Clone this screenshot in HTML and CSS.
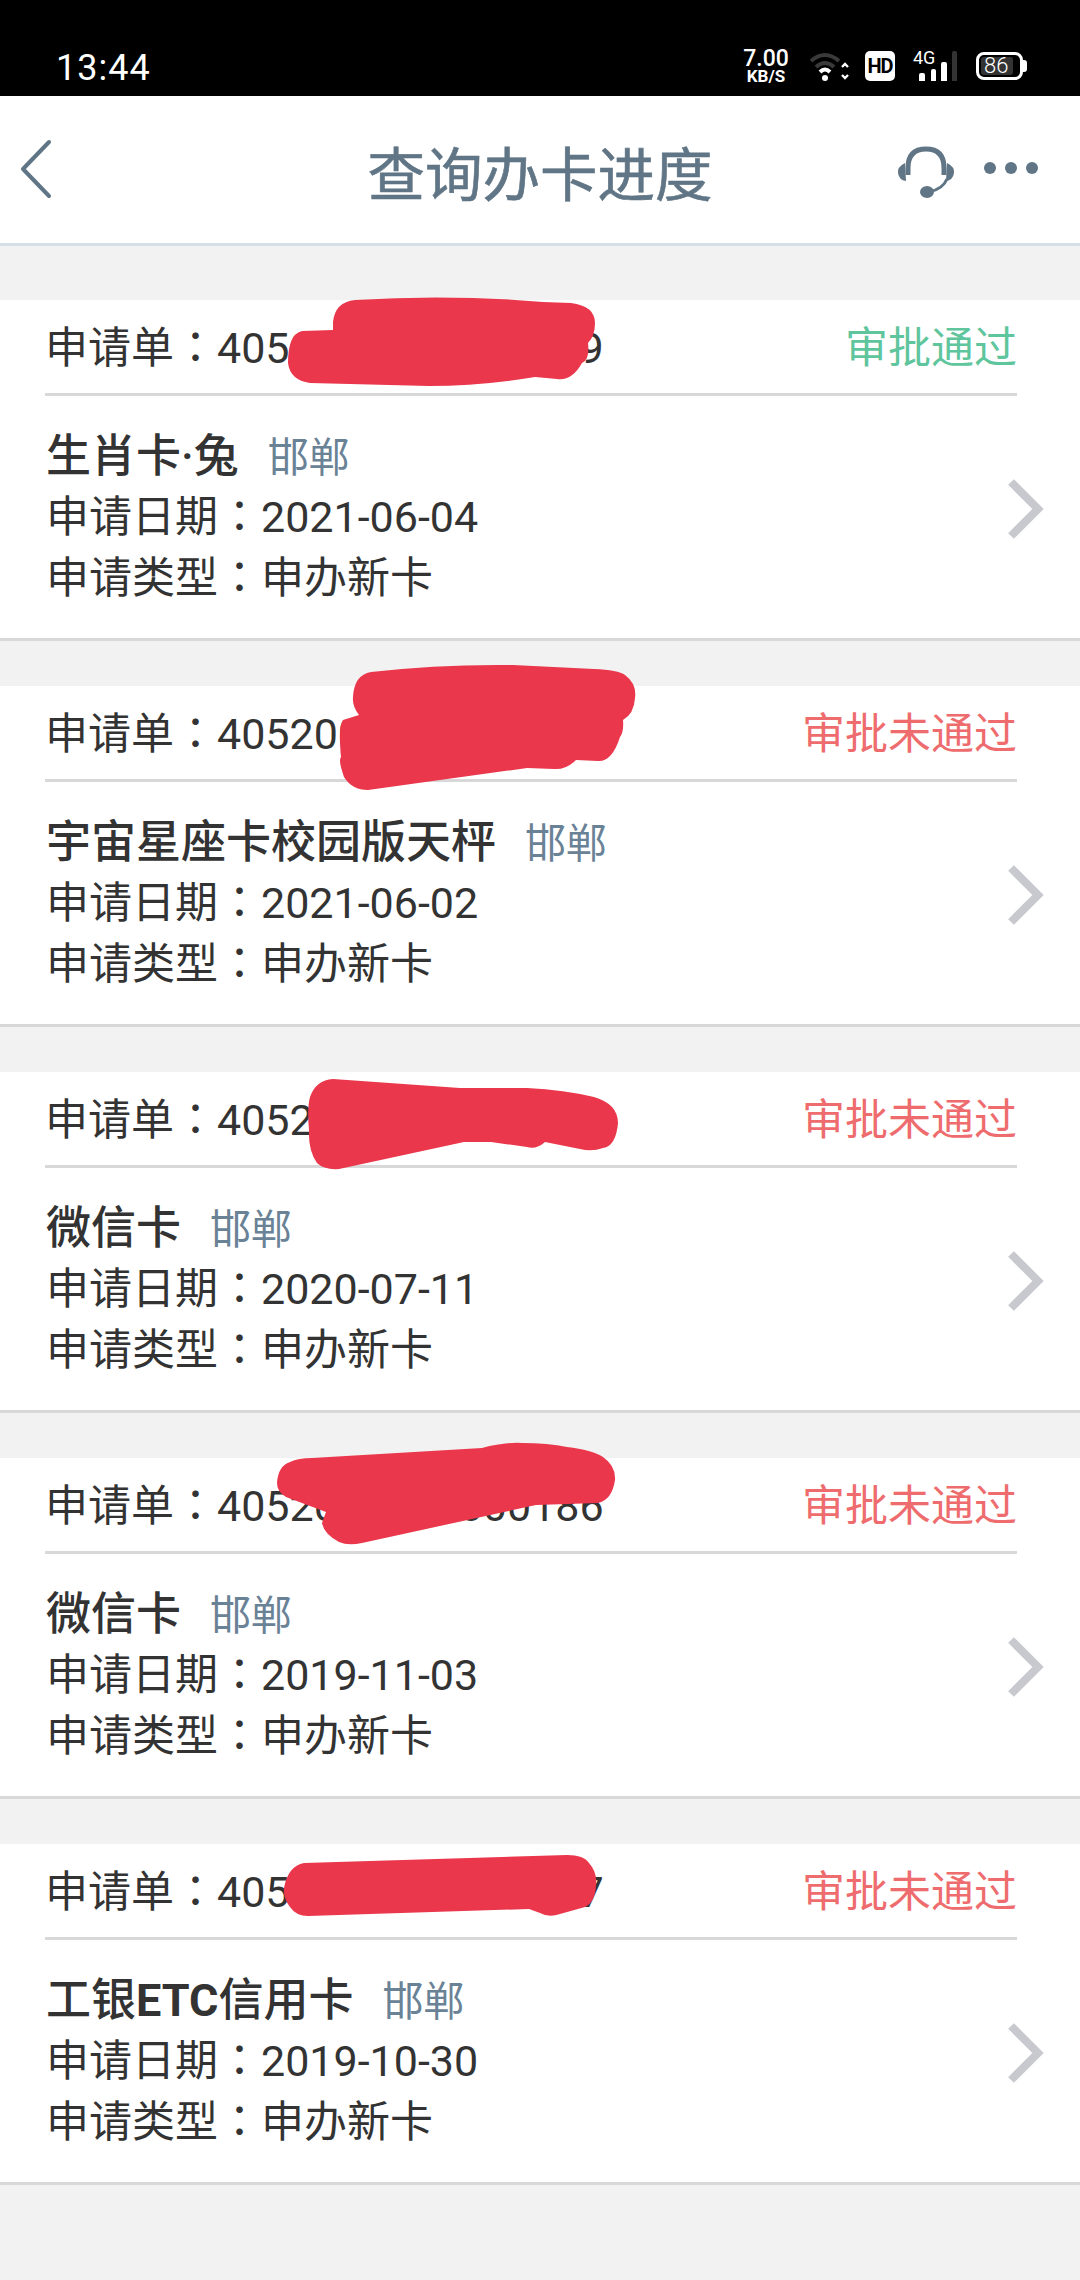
FILE: index.html
```html
<!DOCTYPE html>
<html>
<head>
  <meta charset="utf-8">
  <title>查询办卡进度</title>
  <link rel="stylesheet" href="styles.css">
</head>
<body>
  <div class="status-bar">
    <span class="clock">13:44</span>
    <div class="status-icons">
      <div class="speed"><span class="speed-num">7.00</span><span class="speed-unit">KB/S</span></div>
      <svg class="wifi" width="39" height="29" viewBox="0 0 39 29">
        <path d="M1 9 Q15 -3 29 9" fill="none" stroke="#3a3a3a" stroke-width="4"/>
        <path d="M6 15 Q15 7 24 15" fill="none" stroke="#3a3a3a" stroke-width="4"/>
        <path d="M10 20 Q15 15 20 20" fill="none" stroke="#fff" stroke-width="4"/>
        <circle cx="15" cy="26" r="3" fill="#fff"/>
        <path d="M32 15 L35 12 L38 15 M32 23 L35 26 L38 23" fill="none" stroke="#fff" stroke-width="2.4"/>
      </svg>
      <span class="hd">HD</span>
      <div class="signal">
        <span class="net">4G</span>
        <span class="bar bar1"></span>
        <span class="bar bar2"></span>
        <span class="bar bar3"></span>
        <span class="bar bar4"></span>
      </div>
      <div class="battery"><span class="battery-fill">86</span></div>
    </div>
  </div>

  <div class="top-bar">
    <svg class="back" width="34" height="60" viewBox="0 0 34 60">
      <path d="M30 3 L4 30 L30 57" fill="none" stroke="#607585" stroke-width="4" stroke-linecap="round" stroke-linejoin="round"/>
    </svg>
    <h1 class="page-title">查询办卡进度</h1>
    <div class="top-actions">
      <svg width="58" height="54" viewBox="0 0 58 54">
        <path d="M11 30 V23 Q11 4 29 4 Q47 4 47 23 V30" fill="none" stroke="#607585" stroke-width="5"/>
        <path d="M8 18 Q0 22 1 28 Q2 35 9 36 Z" fill="#607585"/>
        <path d="M50 18 Q58 22 57 28 Q56 35 49 36 Z" fill="#607585"/>
        <path d="M50 34 Q46 44 32 47" fill="none" stroke="#607585" stroke-width="3"/>
        <ellipse cx="30" cy="47" rx="7" ry="6" fill="#607585"/>
      </svg>
      <div class="dots"><span></span><span></span><span></span></div>
    </div>
  </div>

  <div class="list">
    <div class="card">
      <div class="card-head"><span class="order">申请单<span class="colon">：</span>4050000000000009</span><span class="state ok">审批通过</span></div>
      <div class="card-body">
        <div class="info">
          <div class="name">生肖卡·兔<span class="city">邯郸</span></div>
          <div class="line">申请日期<span class="colon">：</span>2021-06-04</div>
          <div class="line">申请类型<span class="colon">：</span>申办新卡</div>
        </div>
        <svg class="arrow" width="40" height="60" viewBox="0 0 40 60"><path d="M5 3 L32 30 L5 57" fill="none" stroke="#c8c9ce" stroke-width="8"/></svg>
      </div>
    </div>

    <div class="card">
      <div class="card-head"><span class="order">申请单<span class="colon">：</span>4052000000000000</span><span class="state fail">审批未通过</span></div>
      <div class="card-body">
        <div class="info">
          <div class="name">宇宙星座卡校园版天枰<span class="city">邯郸</span></div>
          <div class="line">申请日期<span class="colon">：</span>2021-06-02</div>
          <div class="line">申请类型<span class="colon">：</span>申办新卡</div>
        </div>
        <svg class="arrow" width="40" height="60" viewBox="0 0 40 60"><path d="M5 3 L32 30 L5 57" fill="none" stroke="#c8c9ce" stroke-width="8"/></svg>
      </div>
    </div>

    <div class="card">
      <div class="card-head"><span class="order">申请单<span class="colon">：</span>4052000000000000</span><span class="state fail">审批未通过</span></div>
      <div class="card-body">
        <div class="info">
          <div class="name">微信卡<span class="city">邯郸</span></div>
          <div class="line">申请日期<span class="colon">：</span>2020-07-11</div>
          <div class="line">申请类型<span class="colon">：</span>申办新卡</div>
        </div>
        <svg class="arrow" width="40" height="60" viewBox="0 0 40 60"><path d="M5 3 L32 30 L5 57" fill="none" stroke="#c8c9ce" stroke-width="8"/></svg>
      </div>
    </div>

    <div class="card">
      <div class="card-head"><span class="order">申请单<span class="colon">：</span>4052000000000186</span><span class="state fail">审批未通过</span></div>
      <div class="card-body">
        <div class="info">
          <div class="name">微信卡<span class="city">邯郸</span></div>
          <div class="line">申请日期<span class="colon">：</span>2019-11-03</div>
          <div class="line">申请类型<span class="colon">：</span>申办新卡</div>
        </div>
        <svg class="arrow" width="40" height="60" viewBox="0 0 40 60"><path d="M5 3 L32 30 L5 57" fill="none" stroke="#c8c9ce" stroke-width="8"/></svg>
      </div>
    </div>

    <div class="card">
      <div class="card-head"><span class="order">申请单<span class="colon">：</span>4050000000000007</span><span class="state fail">审批未通过</span></div>
      <div class="card-body">
        <div class="info">
          <div class="name">工银<b>ETC</b>信用卡<span class="city">邯郸</span></div>
          <div class="line">申请日期<span class="colon">：</span>2019-10-30</div>
          <div class="line">申请类型<span class="colon">：</span>申办新卡</div>
        </div>
        <svg class="arrow" width="40" height="60" viewBox="0 0 40 60"><path d="M5 3 L32 30 L5 57" fill="none" stroke="#c8c9ce" stroke-width="8"/></svg>
      </div>
    </div>
  </div>

  <!-- red marker strokes someone drew over the order numbers -->
  <svg class="scribbles" width="1080" height="2280" viewBox="0 0 1080 2280">
    <path d="M333 322 Q335 302 355 300 Q450 294 543 302 L571 303 Q595 306 595 323 Q595 336 588 343 Q590 360 582 363 Q572 381 557 379 L535 377 Q480 386 429 386 L310 383 Q290 380 288 363 Q288 334 302 331 L333 330 Z"/>
    <path d="M353 697 Q354 675 371 672 Q440 664 513 665 L594 669 Q618 670 625 675 Q637 684 635 698 Q634 714 623 720 Q624 732 620 737 Q612 762 598 761 L576 760 Q566 770 554 769 L527 768 L368 790 Q352 790 344 777 Q338 760 341 757 Q338 726 343 720 L359 715 Q352 706 353 697 Z"/>
    <path d="M309 1130 Q307 1108 310 1097 Q316 1080 333 1079 L460 1088 L527 1088 Q565 1090 594 1097 Q618 1104 618 1123 Q616 1146 603 1148 Q592 1152 580 1149 L545 1142 Q536 1150 527 1147 L491 1142 L464 1142 L339 1169 Q324 1170 317 1163 Q308 1150 309 1130 Z"/>
    <path d="M277 1483 Q278 1466 290 1462 Q298 1458 312 1458 L482 1448 Q505 1442 522 1443 Q548 1443 567 1447 Q592 1450 603 1457 Q616 1466 615 1480 Q612 1500 598 1503 L536 1505 L362 1543 Q348 1546 339 1542 Q324 1534 322 1523 L326 1512 L286 1497 Q277 1492 277 1483 Z"/>
    <path d="M284 1888 Q288 1866 304 1863 L567 1855 Q584 1855 589 1863 Q597 1872 596 1883 Q596 1902 585 1907 L560 1914 Q549 1918 540 1913 L529 1909 L308 1916 Q296 1916 290 1907 Q283 1898 284 1888 Z"/>
  </svg>
</body>
</html>
```

FILE: styles.css
```css
* {
  box-sizing: border-box;
}

html, body {
  margin: 0;
  padding: 0;
}

body {
  position: relative;
  width: 1080px;
  height: 2280px;
  overflow: hidden;
  background: #f2f2f2;
  color: #333;
  font-family: Roboto, "Noto Sans CJK SC", sans-serif;
}

/* status bar */
.status-bar {
  height: 96px;
  background: #000;
  color: #fff;
  display: flex;
  align-items: flex-end;
  justify-content: space-between;
  padding: 0 57px 12px 56px;
}

.clock {
  font-size: 36px;
  line-height: 44px;
  letter-spacing: 1px;
  margin-bottom: -6px;
}

.status-icons {
  display: flex;
  align-items: center;
  height: 36px;
}

.speed {
  display: flex;
  flex-direction: column;
  align-items: center;
  width: 50px;
  margin-right: 19px;
}

.speed-num {
  font-size: 23px;
  line-height: 20px;
  font-weight: 500;
}

.speed-unit {
  font-size: 17px;
  line-height: 15px;
  font-weight: 700;
}

.wifi {
  margin-right: 16px;
}

.hd {
  width: 30px;
  height: 30px;
  background: #fff;
  color: #000;
  border-radius: 5px;
  font-size: 20px;
  line-height: 30px;
  font-weight: 700;
  text-align: center;
  letter-spacing: -1px;
  margin-right: 18px;
}

.signal {
  position: relative;
  width: 44px;
  height: 30px;
  margin-right: 19px;
  display: flex;
  align-items: flex-end;
  gap: 5px;
  padding-left: 6px;
}

.net {
  position: absolute;
  left: 0;
  top: -1px;
  font-size: 18px;
  line-height: 16px;
}

.bar {
  width: 6px;
  border-radius: 2px 2px 0 0;
  background: #fff;
}

.bar1 { height: 8px; }
.bar2 { height: 12px; margin-left: 1px; }
.bar3 { height: 19px; }
.bar4 { height: 30px; background: #333; margin-left: 0; }

.battery {
  position: relative;
  width: 47px;
  height: 28px;
  border: 3px solid #fff;
  border-radius: 8px;
  padding: 2px;
}

.battery::after {
  content: "";
  position: absolute;
  right: -7px;
  top: 5px;
  width: 4px;
  height: 12px;
  background: #fff;
  border-radius: 0 3px 3px 0;
}

.battery-fill {
  display: block;
  width: 86%;
  height: 18px;
  background: #333;
  border-radius: 3px;
  font-size: 22px;
  line-height: 18px;
  font-weight: 300;
  white-space: nowrap;
  padding-left: 3px;
}

/* top bar */
.top-bar {
  position: relative;
  height: 150px;
  background: #fff;
  border-bottom: 3px solid #d5dfe5;
  display: flex;
  align-items: center;
  justify-content: center;
}

.back {
  position: absolute;
  left: 19px;
  top: 43px;
}

.page-title {
  margin: 3px 0 0;
  font-size: 57.5px;
  font-weight: 400;
  color: #607585;
  -webkit-text-stroke: 0.6px #607585;
}

.top-actions {
  position: absolute;
  right: 42px;
  top: 49px;
  display: flex;
  align-items: flex-start;
  gap: 29px;
}

.dots {
  display: flex;
  gap: 9px;
  margin-top: 17px;
}

.dots span {
  width: 12px;
  height: 12px;
  border-radius: 50%;
  background: #607585;
}

/* list */
.list {
  padding-top: 54px;
  display: flex;
  flex-direction: column;
  gap: 45px;
}

.card {
  background: #fff;
  border-bottom: 3px solid #d8d8d8;
}

.card-head {
  height: 96px;
  margin: 0 63px 0 45px;
  border-bottom: 3px solid #d8d8d8;
  display: flex;
  align-items: center;
  justify-content: space-between;
  padding-top: 2px;
  font-size: 43px;
  line-height: 90px;
}

/* the colon sits centred in its cell in the TC font */
.colon {
  font-family: "Noto Sans CJK TC", sans-serif;
  line-height: 1;
}

.ok {
  color: #5fc59d;
}

.fail {
  color: #ee6c6e;
}

.card-body {
  height: 242px;
  display: flex;
  align-items: center;
  justify-content: space-between;
  padding: 1px 34px 0 46px;
}

.info {
  font-size: 43px;
}

.name, .line {
  height: 60.5px;
  line-height: 60.5px;
}

.name {
  font-size: 45px;
  font-weight: 500;
}

.name b {
  font-weight: 700;
}

.city {
  margin-left: 29px;
  font-size: 41px;
  font-weight: 400;
  color: #6a8296;
  line-height: 1;
}

.arrow {
  margin-bottom: 18px;
}

/* sits over the order numbers */
.scribbles {
  position: absolute;
  left: 0;
  top: 0;
  fill: #ea374c;
}
```
